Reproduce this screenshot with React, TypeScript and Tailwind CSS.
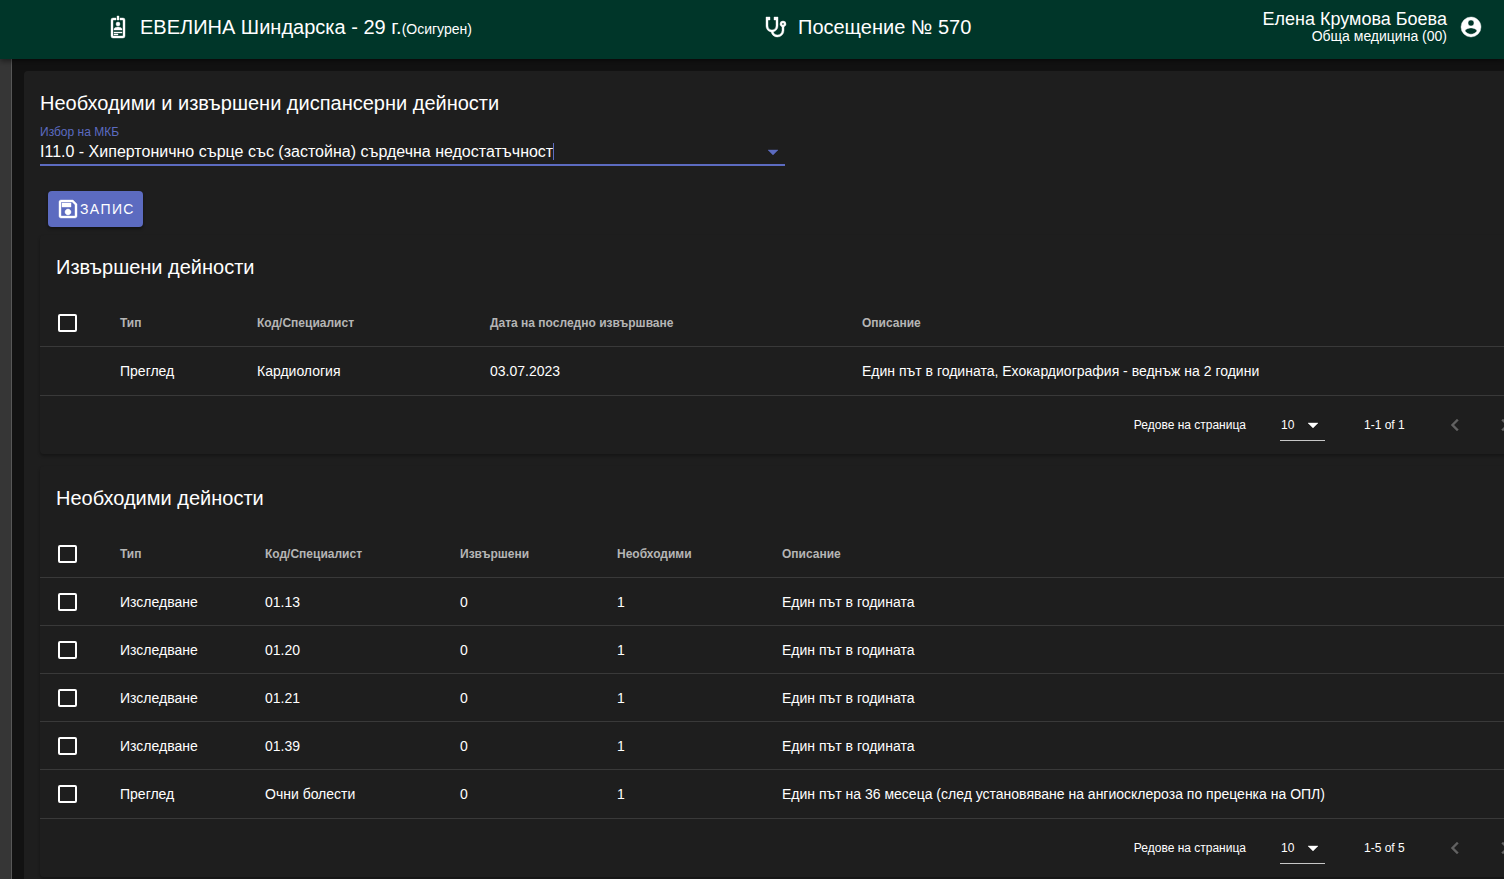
import { useState, type ReactNode } from "react"
import { clsx } from "clsx"

const icons = {
  badge:
    "M17,3H14V5H17V21H7V5H10V3H7A2,2 0 0,0 5,5V21A2,2 0 0,0 7,23H17A2,2 0 0,0 19,21V5A2,2 0 0,0 17,3M12,7A2,2 0 0,1 14,9A2,2 0 0,1 12,11A2,2 0 0,1 10,9A2,2 0 0,1 12,7M16,15H8V14C8,12.67 10.67,12 12,12C13.33,12 16,12.67 16,14V15M16,18H8V17H16V18M12,20H8V19H12V20M13,5H11V1H13V5Z",
  stethoscope:
    "M19,8C19.56,8 20,8.43 20,9A1,1 0 0,1 19,10C18.43,10 18,9.55 18,9C18,8.43 18.43,8 19,8M2,2V11C2,13.96 4.19,16.5 7.14,16.91C7.76,19.92 10.42,22 13.5,22A6.5,6.5 0 0,0 20,15.5V11.81C21.16,11.39 22,10.29 22,9A3,3 0 0,0 19,6A3,3 0 0,0 16,9C16,10.29 16.84,11.4 18,11.81V15.41C18,17.91 16,19.91 13.5,19.91C11.5,19.91 9.82,18.7 9.22,16.9C12,16.3 14,13.8 14,11V2H10V5H12V11A4,4 0 0,1 8,15A4,4 0 0,1 4,11V5H6V2H2Z",
  account:
    "M12,19.2C9.5,19.2 7.29,17.92 6,16C6.03,14 10,12.9 12,12.9C14,12.9 17.97,14 18,16C16.71,17.92 14.5,19.2 12,19.2M12,5A3,3 0 0,1 15,8A3,3 0 0,1 12,11A3,3 0 0,1 9,8A3,3 0 0,1 12,5M12,2A10,10 0 0,0 2,12A10,10 0 0,0 12,22A10,10 0 0,0 22,12C22,6.47 17.5,2 12,2Z",
  save: "M17 3H5C3.89 3 3 3.9 3 5V19C3 20.1 3.89 21 5 21H19C20.1 21 21 20.1 21 19V7L17 3M19 19H5V5H16.17L19 7.83V19M12 12C10.34 12 9 13.34 9 15S10.34 18 12 18 15 16.66 15 15 13.66 12 12 12M6 6H15V10H6V6Z",
  menuDown: "M7,10L12,15L17,10H7Z",
  chevronLeft: "M15.41,16.58L10.83,12L15.41,7.41L14,6L8,12L14,18L15.41,16.58Z",
  chevronRight: "M8.59,16.58L13.17,12L8.59,7.41L10,6L16,12L10,18L8.59,16.58Z",
}

function Icon({ name, className }: { name: keyof typeof icons; className?: string }) {
  return (
    <svg
      viewBox="0 0 24 24"
      fill="currentColor"
      stroke="currentColor"
      strokeWidth="0.4"
      aria-hidden="true"
      className={clsx("size-6 shrink-0", className)}
    >
      <path d={icons[name]} />
    </svg>
  )
}

interface Column {
  title: string
  width: string
}

interface Activity {
  cells: string[]
  selectable: boolean
}

const doneColumns: Column[] = [
  { title: "Тип", width: "w-[137px]" },
  { title: "Код/Специалист", width: "w-[233px]" },
  { title: "Дата на последно извършване", width: "w-[372px]" },
  { title: "Описание", width: "w-auto" },
]

const doneRows: Activity[] = [
  {
    cells: ["Преглед", "Кардиология", "03.07.2023", "Един път в годината, Ехокардиография - веднъж на 2 години"],
    selectable: false,
  },
]

const neededColumns: Column[] = [
  { title: "Тип", width: "w-[145px]" },
  { title: "Код/Специалист", width: "w-[195px]" },
  { title: "Извършени", width: "w-[157px]" },
  { title: "Необходими", width: "w-[165px]" },
  { title: "Описание", width: "w-auto" },
]

const neededRows: Activity[] = [
  { cells: ["Изследване", "01.13", "0", "1", "Един път в годината"], selectable: true },
  { cells: ["Изследване", "01.20", "0", "1", "Един път в годината"], selectable: true },
  { cells: ["Изследване", "01.21", "0", "1", "Един път в годината"], selectable: true },
  { cells: ["Изследване", "01.39", "0", "1", "Един път в годината"], selectable: true },
  {
    cells: [
      "Преглед",
      "Очни болести",
      "0",
      "1",
      "Един път на 36 месеца (след установяване на ангиосклероза по преценка на ОПЛ)",
    ],
    selectable: true,
  },
]

function Checkbox({ label }: { label: string }) {
  return (
    <input
      type="checkbox"
      aria-label={label}
      className="block h-[18px] w-[19px] appearance-none rounded-xs border-2 border-white checked:bg-[#5c6bc0]"
    />
  )
}

function TableFooter({ id, range }: { id: string; range: string }) {
  return (
    <div className="flex h-[59px] items-center justify-end border-t border-[#393939] pr-[7px] text-xs">
      <label htmlFor={id}>Редове на страница</label>
      <div className="mr-[39px] ml-[34px] flex h-8 w-[45px] items-center border-b border-[#c7c7c7]">
        <select id={id} defaultValue="10" className="w-5 appearance-none bg-transparent pl-px outline-none">
          <option>10</option>
          <option>25</option>
        </select>
        <Icon name="menuDown" className="ml-px" />
      </div>
      <span className="w-[73px]">{range}</span>
      <button type="button" aria-label="Предишна страница" disabled className="grid size-9 place-items-center text-[#626262]">
        <Icon name="chevronLeft" />
      </button>
      <button type="button" aria-label="Следваща страница" disabled className="ml-[14px] grid size-9 place-items-center text-[#626262]">
        <Icon name="chevronRight" />
      </button>
    </div>
  )
}

interface ActivityCardProps {
  id: string
  title: string
  columns: Column[]
  rows: Activity[]
  range: string
}

function ActivityCard({ id, title, columns, rows, range }: ActivityCardProps) {
  return (
    <section className="rounded bg-[#1e1e1e] shadow-[0_2px_3px_rgba(0,0,0,0.3)]">
      <h2 className="p-4 text-xl leading-8">{title}</h2>
      <table className="w-full table-fixed border-separate border-spacing-0 text-left text-sm">
        <thead className="text-xs text-[#b5b5b5]">
          <tr>
            <th className="h-12 w-16 border-b border-[#393939] pl-[18px]">
              <Checkbox label="Избери всички" />
            </th>
            {columns.map((column) => (
              <th key={column.title} className={clsx("h-12 border-b border-[#393939] px-4", column.width)}>
                {column.title}
              </th>
            ))}
          </tr>
        </thead>
        <tbody className="[&>tr:last-child>td]:border-b-0">
          {rows.map((row, i) => (
            <tr key={i}>
              <td className="h-12 border-b border-[#393939] pl-[18px]">
                {row.selectable && <Checkbox label={`Избери ${row.cells[0]} ${row.cells[1]}`} />}
              </td>
              {row.cells.map((cell, j) => (
                <td key={j} className="h-12 border-b border-[#393939] px-4">
                  {cell}
                </td>
              ))}
            </tr>
          ))}
        </tbody>
      </table>
      <TableFooter id={id} range={range} />
    </section>
  )
}

function HeaderItem({ icon, children }: { icon: keyof typeof icons; children: ReactNode }) {
  return (
    <div className="flex items-center gap-2.5 text-xl leading-8 whitespace-nowrap">
      <Icon name={icon} />
      <p>{children}</p>
    </div>
  )
}

function AppHeader() {
  return (
    <header className="relative grid h-[59px] grid-cols-[658fr_719fr] items-center bg-[#003629] pr-[21px] pb-1.5 pl-[106px] shadow-[0_2px_6px_rgba(0,0,0,0.5)]">
      <HeaderItem icon="badge">
        ЕВЕЛИНА Шиндарска - 29 г.<span className="text-sm">(Осигурен)</span>
      </HeaderItem>
      <div className="flex items-center justify-between">
        <HeaderItem icon="stethoscope">Посещение № 570</HeaderItem>
        <div className="flex items-center gap-3">
          <div className="text-right">
            <p className="text-lg leading-[18px]">Елена Крумова Боева</p>
            <p className="text-sm leading-4">Обща медицина (00)</p>
          </div>
          <button type="button" aria-label="Профил">
            <Icon name="account" />
          </button>
        </div>
      </div>
    </header>
  )
}

export default function App() {
  const [diagnosis, setDiagnosis] = useState("I11.0 - Хипертонично сърце със (застойна) сърдечна недостатъчност")

  return (
    <div className="flex h-screen flex-col overflow-hidden bg-[#121212] font-['Liberation_Sans',Arial,sans-serif] text-white">
      <AppHeader />
      <div className="flex min-h-0 flex-1">
        <aside className="w-3 shrink-0 border-r border-[#575757] bg-[#363636]" />
        <main className="min-w-0 flex-1 overflow-hidden pt-3 pl-3">
          {/* The card is wider than the viewport and gets cut off on the right */}
          <div className="-mr-[42px] rounded bg-[#1e1e1e] p-4">
            <h1 className="text-xl leading-8">Необходими и извършени диспансерни дейности</h1>

            <div className="w-1/2 pt-1.5">
              <label htmlFor="diagnosis" className="block text-xs leading-[14px] text-[#5c6bc0]">
                Избор на МКБ
              </label>
              <div className="flex h-[27px] items-center border-b-2 border-[#5c6bc0]">
                <input
                  id="diagnosis"
                  role="combobox"
                  aria-expanded="false"
                  value={diagnosis}
                  onChange={(e) => setDiagnosis(e.target.value)}
                  className="field-sizing-content bg-transparent text-base outline-none"
                />
                <span className="h-[17px] w-px bg-[#5c6bc0]" />
                <Icon name="menuDown" className="ml-auto text-[#5c6bc0]" />
              </div>
            </div>

            <button
              type="button"
              className="mx-2 mt-[25px] mb-2 flex h-9 items-center rounded bg-[#5c6bc0] px-2 text-sm tracking-widest shadow-[0_2px_3px_rgba(0,0,0,0.4)]"
            >
              <Icon name="save" />
              ЗАПИС
            </button>

            <div className="flex flex-col gap-3">
              <ActivityCard id="done-per-page" title="Извършени дейности" columns={doneColumns} rows={doneRows} range="1-1 of 1" />
              <ActivityCard id="needed-per-page" title="Необходими дейности" columns={neededColumns} rows={neededRows} range="1-5 of 5" />
            </div>
          </div>
        </main>
      </div>
    </div>
  )
}
